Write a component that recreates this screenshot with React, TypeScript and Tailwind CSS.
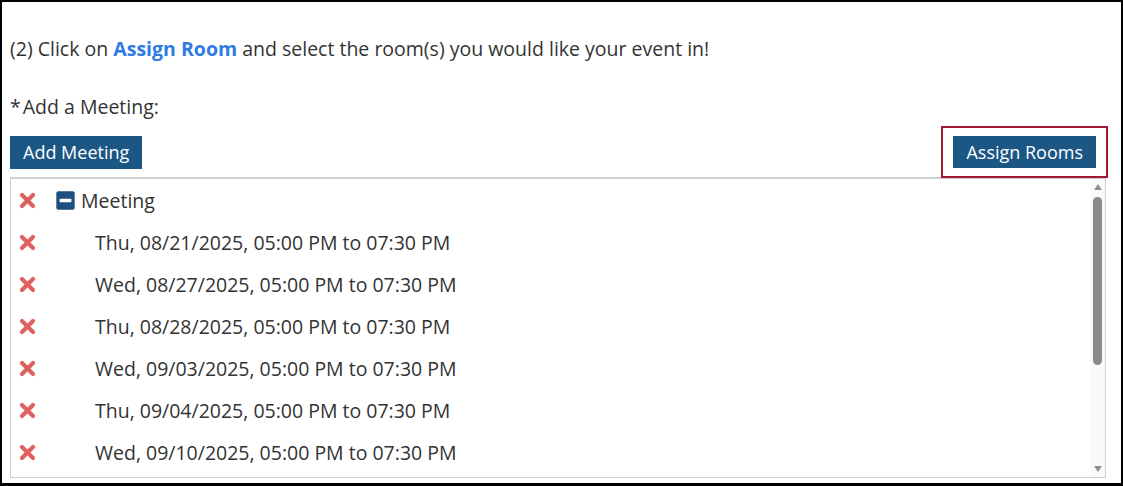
import { FaMinusSquare } from "react-icons/fa";

const meetings = [
    "Thu, 08/21/2025, 05:00 PM to 07:30 PM",
    "Wed, 08/27/2025, 05:00 PM to 07:30 PM",
    "Thu, 08/28/2025, 05:00 PM to 07:30 PM",
    "Wed, 09/03/2025, 05:00 PM to 07:30 PM",
    "Thu, 09/04/2025, 05:00 PM to 07:30 PM",
    "Wed, 09/10/2025, 05:00 PM to 07:30 PM",
];

function RemoveIcon() {
    return (
        <svg width="17" height="17" viewBox="0 0 17 17" className="shrink-0">
            <path d="M3 3 L14 14 M14 3 L3 14" stroke="#e06060" strokeWidth="4.2" strokeLinecap="round" />
        </svg>
    );
}

export default function App() {
    return (
        <div
            className="h-[486px] w-[1123px] overflow-hidden border-2 border-b-[3px] border-black bg-white pl-2 pr-[15px] pt-[33px] text-[19.5px] leading-[27px] text-[#333]"
            style={{ fontFamily: '"Open Sans", sans-serif' }}
        >
            <p>
                (2) Click on <span className="font-bold text-[#2f7be3]">Assign Room</span> and select the room(s) you would like your event in!
            </p>

            <p className="mt-[31px]">
                <span>*</span>
                <span className="ml-[2px]">Add a Meeting:</span>
            </p>

            {/* Buttons */}
            <div className="mt-[6px] flex items-center justify-between">
                <button className="h-[33px] bg-[#1b5685] px-[13px] text-[18px] text-white">Add Meeting</button>
                <div className="-mr-[2px] border-2 border-[#a3182f] px-[10px] py-[8px]">
                    <button className="h-[32px] bg-[#1b5685] px-[13px] text-[18px] text-white">Assign Rooms</button>
                </div>
            </div>

            {/* Meeting list */}
            <div className="-mt-px flex h-[301px] border border-t-2 border-[#d0d0d0] border-t-[#cfcfcf]">
                <div className="flex-1 overflow-hidden">
                    <div className="flex h-[42px] items-center pl-[8px]">
                        <RemoveIcon />
                        <span className="ml-[19px] flex text-[#1e4f7f]">
                            <FaMinusSquare size={21} />
                        </span>
                        <span className="ml-[5px]">Meeting</span>
                    </div>
                    {meetings.map((m) => (
                        <div key={m} className="flex h-[42px] items-center pl-[8px]">
                            <RemoveIcon />
                            <span className="ml-[59px]">{m}</span>
                        </div>
                    ))}
                </div>

                {/* Scrollbar */}
                <div className="flex w-[15px] flex-col items-center bg-[#fafafa] py-[5px]">
                    <div className="h-0 w-0 border-x-[4px] border-b-[6px] border-x-transparent border-b-[#8f8f8f]" />
                    <div className="mt-[7px] h-[168px] w-[9px] rounded-full bg-[#8a8a8a]" />
                    <div className="flex-1" />
                    <div className="h-0 w-0 border-x-[4px] border-t-[6px] border-x-transparent border-t-[#8f8f8f]" />
                </div>
            </div>
        </div>
    );
}
